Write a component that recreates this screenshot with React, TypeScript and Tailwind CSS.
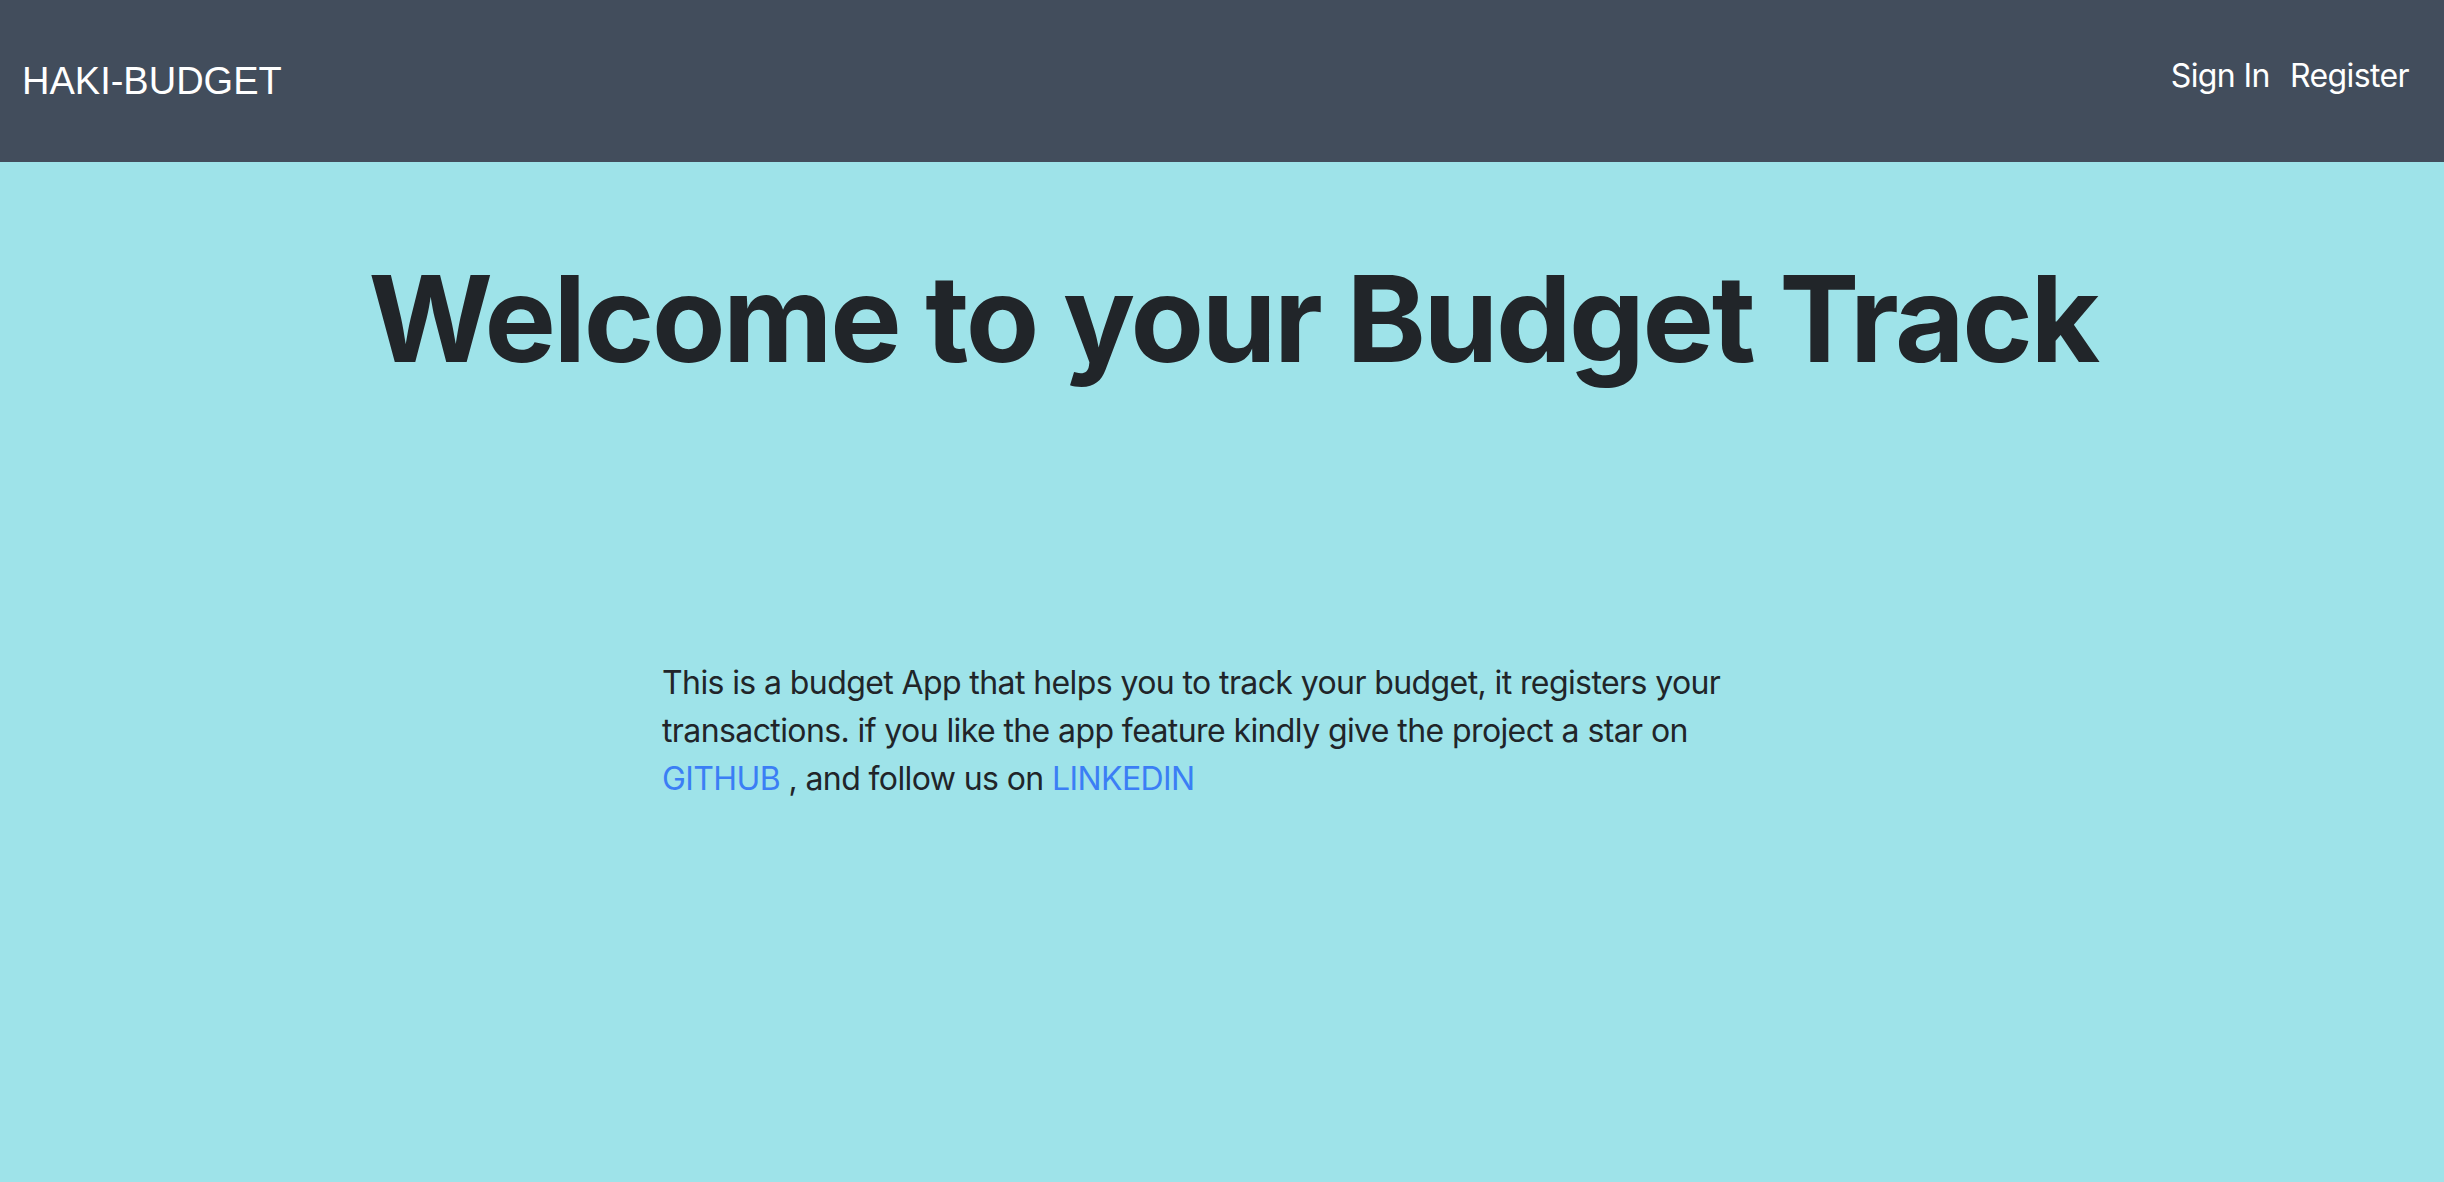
export default function App() {
  return (
    <div
      className="min-h-screen bg-[#9ee3e9] text-[#212529]"
      style={{ fontFamily: "Inter, 'Noto Sans', sans-serif" }}
    >
      <nav className="flex h-[162px] items-center justify-between bg-[#424d5c] pl-[22px] pr-[35px] text-white">
        <a href="#" className="text-[38px] leading-none" style={{ fontFamily: "'Liberation Sans', Arial, sans-serif" }}>
          HAKI-BUDGET
        </a>
        <div className="mb-[10px] flex gap-[20px] text-[32px] leading-none tracking-[-0.6px]">
          <a href="#">Sign In</a>
          <a href="#">Register</a>
        </div>
      </nav>

      <main>
        <h1 className="mt-[85px] pl-[22px] text-center text-[120px] font-bold leading-[1.2] tracking-[-0.02em]">
          Welcome to your Budget Track
        </h1>

        <p className="ml-[662px] mt-[268px] w-[1120px] text-[32px] leading-[48px] tracking-[-0.6px]">
          This is a budget App that helps you to track your budget, it registers your
          <br />
          transactions. if you like the app feature kindly give the project a star on
          <br />
          <a href="#" className="text-[#3b7ef5]">GITHUB</a> , and follow us on{" "}
          <a href="#" className="text-[#3b7ef5]">LINKEDIN</a>
        </p>
      </main>
    </div>
  );
}
